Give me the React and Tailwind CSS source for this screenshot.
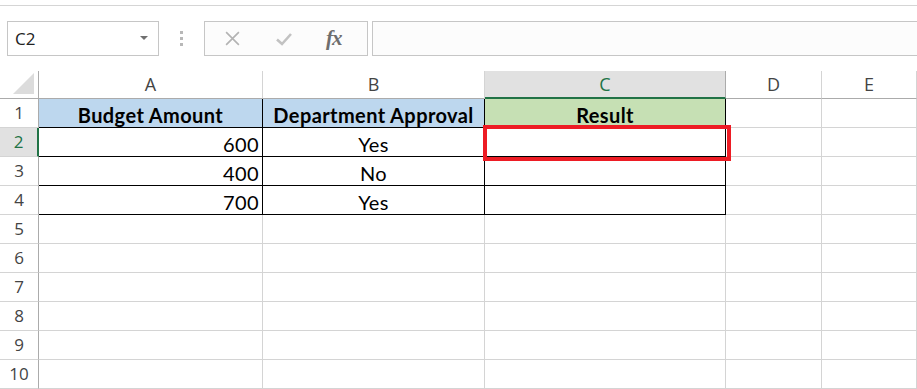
import React from 'react';

const cols = [
  { key: 'A', w: 'w-[224px]' },
  { key: 'B', w: 'w-[222px]' },
  { key: 'C', w: 'w-[241px]' },
  { key: 'D', w: 'w-[96px]' },
  { key: 'E', w: 'w-[95px]' },
];

const data = [
  ['Budget Amount', 'Department Approval', 'Result'],
  ['600', 'Yes', ''],
  ['400', 'No', ''],
  ['700', 'Yes', ''],
];

function FormulaBar() {
  return (
    <div className="flex items-stretch h-[35px] mt-[15px]">
      <div className="ml-[7px] w-[152px] border border-[#c6c6c6] bg-white flex items-center justify-between pl-[7px] pr-[10px]">
        <span className="text-[17px] text-[#222] font-['Open_Sans',sans-serif]">C2</span>
        <span className="w-0 h-0 border-l-[4px] border-r-[4px] border-t-[4px] border-l-transparent border-r-transparent border-t-[#707070] mb-[1px]" />
      </div>
      <div className="w-[45px] flex flex-col items-center justify-center gap-[3px]">
        <span className="w-[3px] h-[3px] bg-[#b8b8b8]" />
        <span className="w-[3px] h-[3px] bg-[#b8b8b8]" />
        <span className="w-[3px] h-[3px] bg-[#b8b8b8]" />
      </div>
      <div className="w-[164px] border border-[#c6c6c6] bg-[#fcfcfc] flex items-center">
        <svg width="17" height="17" viewBox="0 0 16 16" className="ml-[19px]">
          <path d="M2 2 L14 14 M14 2 L2 14" stroke="#b3b3b3" strokeWidth="1.5" fill="none" />
        </svg>
        <svg width="18" height="16" viewBox="0 0 18 16" className="ml-[34px]">
          <path d="M2 8.5 L7 13 L16 3" stroke="#c2c2c2" strokeWidth="2.6" fill="none" />
        </svg>
        <span className="ml-[33px] text-[21px] italic font-bold text-[#6e6e6e] font-['Liberation_Serif',serif] tracking-[-1px]">fx</span>
      </div>
      <div className="ml-[4px] flex-1 border-y border-l border-[#c6c6c6] bg-[#fcfcfc]" />
    </div>
  );
}

function Grid() {
  return (
    <div className="relative mt-[15px]">
      <div className="flex h-[28px]">
        <div className="w-[39px] border-r border-b border-[#ababab] flex items-end justify-end pr-[4px] pb-[4px]">
          <svg width="21" height="21" viewBox="0 0 21 21">
            <path d="M21 0 L21 21 L0 21 Z" fill="#dcdcdc" />
          </svg>
        </div>
        {cols.map((c) => (
          <div
            key={c.key}
            className={`${c.w} flex items-center justify-center text-[18px] font-['Open_Sans',sans-serif] ${
              c.key === 'C'
                ? 'bg-[#e1e1e1] border-b-2 border-b-[#217346] border-r border-r-[#ababab] text-[#217346]'
                : 'border-r border-r-[#d4d4d4] border-b border-b-[#ababab] text-[#444]'
            }`}
          >
            {c.key}
          </div>
        ))}
      </div>
      {Array.from({ length: 10 }, (_, r) => (
        <div key={r} className="flex h-[29px]">
          <div
            className={`w-[39px] flex items-center justify-center text-[17px] font-['Open_Sans',sans-serif] ${
              r === 1
                ? 'bg-[#e1e1e1] border-r-2 border-r-[#217346] border-b border-b-[#d4d4d4] text-[#217346]'
                : 'border-r border-r-[#ababab] border-b border-b-[#d4d4d4] text-[#444]'
            }`}
          >
            {r + 1}
          </div>
          {cols.map((c, ci) => {
            const inTable = r < 4 && ci < 3;
            const val = inTable ? data[r][ci] : '';
            let bg = 'bg-white';
            if (r === 0 && ci < 2) bg = 'bg-[#bdd7ee]';
            if (r === 0 && ci === 2) bg = 'bg-[#c6e0b4]';
            const border = inTable
              ? 'border-r border-b border-black'
              : 'border-r border-b border-[#d4d4d4]';
            const align =
              r > 0 && ci === 0 ? 'justify-end pr-[3px]' : 'justify-center';
            return (
              <div
                key={c.key}
                className={`${c.w} ${bg} ${border} ${align} flex items-end pb-[2px] text-[20px] tracking-[0.4px] leading-none text-black font-['Lato',sans-serif] ${
                  r === 0 ? 'font-bold' : ''
                }`}
              >
                {val}
              </div>
            );
          })}
        </div>
      ))}
      <div className="absolute left-[483px] top-[54px] w-[248px] h-[36px] border-[4px] border-[#ed1c24]" />
    </div>
  );
}

export default function App() {
  return (
    <div className="w-[917px] h-[389px] overflow-hidden bg-white">
      <div className="h-[6px] border-b border-[#d5d5d5]" />
      <FormulaBar />
      <Grid />
    </div>
  );
}
